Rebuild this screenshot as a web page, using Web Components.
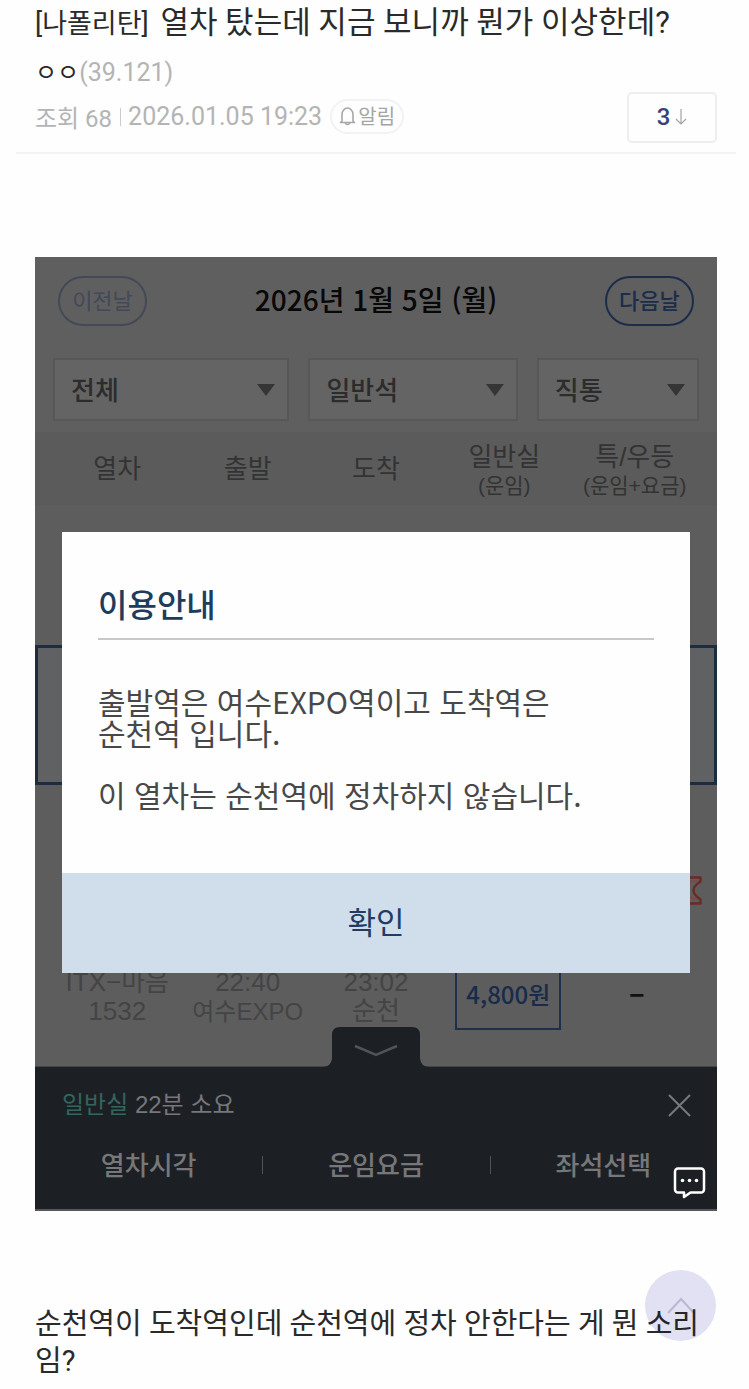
<!DOCTYPE html>
<html lang="ko">
<head>
<meta charset="utf-8">
<meta name="viewport" content="width=device-width, initial-scale=1">
<title>열차 탔는데 지금 보니까 뭔가 이상한데?</title>
<style>
    body {
        margin: 0;
        background: #fefefe;
        color: #2a2a2a;
        font-family: Roboto, "Noto Sans CJK KR", sans-serif;
    }
</style>
</head>
<body>
<post-view>
    <post-header slot="header" category="[나폴리탄]" nick="ㅇㅇ" ip="(39.121)" views="68" date="2026.01.05 19:23" comments="3">열차 탔는데 지금 보니까 뭔가 이상한데?</post-header>
    <train-board>
        <notice-dialog slot="dialog" heading="이용안내" confirm="확인">출발역은 여수EXPO역이고 도착역은
순천역 입니다.

이 열차는 순천역에 정차하지 않습니다.</notice-dialog>
    </train-board>
    <span slot="text">순천역이 도착역인데 순천역에 정차 안한다는 게 뭔 소리임?</span>
</post-view>
<top-button></top-button>

<script>
class PostView extends HTMLElement {
    constructor() {
        super();
        this.attachShadow({ mode: 'open' });
        this.shadowRoot.innerHTML = `
            <style>
                :host { display: block; }
                .content { padding: 103px 32px 8px 35px; }
                p {
                    margin: 95px 0 0;
                    font-size: 29px;
                    line-height: 37px;
                    word-break: break-all;
                }
            </style>
            <article>
                <slot name="header"></slot>
                <div class="content">
                    <slot></slot>
                    <p><slot name="text"></slot></p>
                </div>
            </article>
        `;
    }
}

class PostHeader extends HTMLElement {
    constructor() {
        super();
        this.attachShadow({ mode: 'open' });
    }

    connectedCallback() {
        const attr = name => this.getAttribute(name);
        this.shadowRoot.innerHTML = `
            <style>
                :host {
                    display: block;
                    margin: 0 13px 0 16px;
                    padding: 0 19px 9px;
                    border-bottom: 2px solid #f3f3f3;
                }
                h1 {
                    margin: 0;
                    font-size: 31px;
                    font-weight: 400;
                    line-height: 46px;
                }
                .category {
                    font-size: 27px;
                    margin-right: 4px;
                }
                .bottom {
                    display: flex;
                    justify-content: space-between;
                    align-items: flex-end;
                }
                .writer {
                    font-size: 24px;
                    line-height: 32px;
                    padding-top: 10px;
                }
                .ip, .meta { color: #b4b4b4; }
                .ip { font-size: 25px; }
                .meta {
                    display: flex;
                    align-items: center;
                    font-size: 24px;
                    height: 35px;
                    margin: 10px 0 9px;
                }
                .views {
                    padding-right: 8px;
                }
                time {
                    font-size: 25px;
                    line-height: 20px;
                    padding-left: 7px;
                    margin-right: 8px;
                }
                .bar {
                    width: 1px;
                    height: 18px;
                    background: #ccc;
                }
                button {
                    display: flex;
                    align-items: center;
                    justify-content: center;
                    box-sizing: border-box;
                    background: none;
                    font-family: inherit;
                    padding: 0;
                }
                .alarm {
                    width: 74px;
                    height: 35px;
                    gap: 2px;
                    padding-bottom: 2px;
                    border: 2px solid #f2f2f2;
                    border-radius: 18px;
                    color: #a5a5a5;
                    font-size: 20px;
                }
                .count {
                    width: 90px;
                    height: 51px;
                    gap: 5px;
                    padding-bottom: 2px;
                    border: 2px solid #eee;
                    border-radius: 5px;
                    color: #3b4078;
                    font-size: 24px;
                    font-weight: 500;
                }
            </style>
            <h1><span class="category">${attr('category')}</span> <slot></slot></h1>
            <div class="bottom">
                <div>
                    <div class="writer">${attr('nick')}<span class="ip">${attr('ip')}</span></div>
                    <div class="meta">
                        <span class="views">조회 ${attr('views')}</span>
                        <span class="bar"></span>
                        <time>${attr('date')}</time>
                        <button class="alarm">
                            <svg width="17" height="20" viewBox="0 0 17 20" fill="none" stroke="#a8a8a8" stroke-width="1.6" stroke-linejoin="round">
                                <path d="M3 15V8.500a5.500 6.500 0 0 1 11 0V15l1.500 1.500h-14z"/>
                                <path d="M6.500 16.500a2 2 0 0 0 4 0"/>
                            </svg>알림
                        </button>
                    </div>
                </div>
                <button class="count">${attr('comments')}
                    <svg width="12" height="18" viewBox="0 0 12 18" fill="none" stroke="#a2a2a2" stroke-width="1.2">
                        <path d="M6 1v15M1 11l5 5 5-5"/>
                    </svg>
                </button>
            </div>
        `;
    }
}

class DropDown extends HTMLElement {
    constructor() {
        super();
        this.attachShadow({ mode: 'open' });
    }

    connectedCallback() {
        this.shadowRoot.innerHTML = `
            <style>
                :host {
                    display: block;
                    position: relative;
                    min-width: 0;
                }
                select {
                    display: block;
                    appearance: none;
                    box-sizing: border-box;
                    width: 100%;
                    height: 63px;
                    margin: 0;
                    padding: 2px 40px 0 16px;
                    border: 2px solid #575757;
                    border-radius: 0;
                    background: #646464;
                    color: #2c2c2c;
                    font-family: inherit;
                    font-size: 26px;
                    font-weight: 500;
                }
                svg {
                    position: absolute;
                    right: 14px;
                    top: 26px;
                    pointer-events: none;
                }
            </style>
            <select aria-label="${this.getAttribute('label')}">
                <option>${this.getAttribute('value')}</option>
            </select>
            <svg width="18" height="12" viewBox="0 0 18 12" fill="#353535"><path d="M0 0h18L9 12z"/></svg>
        `;
    }
}

class TrainBoard extends HTMLElement {
    constructor() {
        super();
        this.attachShadow({ mode: 'open' });
        this.shadowRoot.innerHTML = `
            <style>
                :host {
                    display: block;
                    position: relative;
                    background: #5d5d5d;
                    color: #333;
                    font-family: "Liberation Sans", "Noto Sans CJK KR", sans-serif;
                }
                button {
                    background: none;
                    border: 0;
                    padding: 0;
                    color: inherit;
                    font-family: inherit;
                }
                .top {
                    padding: 19px 18px 11px;
                    background: #5f5f5f;
                }
                .day {
                    display: flex;
                    align-items: center;
                    justify-content: space-between;
                    padding: 0 5px;
                    margin-bottom: 32px;
                }
                .day button {
                    box-sizing: border-box;
                    width: 89px;
                    height: 50px;
                    padding-bottom: 4px;
                    border: 2px solid currentColor;
                    border-radius: 25px;
                    font-size: 22px;
                    color: #1c2d4b;
                    font-weight: 500;
                }
                .day button.prev {
                    color: #434957;
                    font-weight: 400;
                }
                h2 {
                    margin: 0;
                    padding-bottom: 4px;
                    font-family: "Noto Sans CJK KR", sans-serif;
                    font-size: 28px;
                    line-height: 40px;
                    font-weight: 500;
                    color: #080808;
                }
                .filters {
                    display: grid;
                    grid-template-columns: 236fr 209fr 162fr;
                    gap: 19px;
                }
                table {
                    width: 100%;
                    table-layout: fixed;
                    border-collapse: collapse;
                    text-align: center;
                }
                col { width: 19%; }
                col.edge { width: 22%; }
                th, td { padding: 0; }
                th:first-child, td:first-child { padding-left: 16px; }
                th:last-child, td:last-child { padding-right: 16px; }
                th {
                    height: 73px;
                    background: #5b5b5b;
                    font-size: 26px;
                    font-weight: 400;
                    line-height: 30px;
                }
                th.fare {
                    box-sizing: border-box;
                    padding-top: 4px;
                }
                th small {
                    display: block;
                    font-size: 21px;
                    line-height: 28px;
                }
                td {
                    box-sizing: border-box;
                    height: 140px;
                    padding-top: 4px;
                    font-size: 26px;
                    line-height: 29px;
                    color: #444;
                }
                .station { font-size: 24px; }
                .selected {
                    background: #606162;
                    box-shadow: inset 0 0 0 3px #1e2c3f;
                }
                td.waiting {
                    text-align: right;
                    vertical-align: bottom;
                    padding: 0 15px 20px 0;
                }
                .waiting svg { display: block; margin-left: auto; }
                td.buy { padding: 0 0 0 8px; }
                .price {
                    display: block;
                    box-sizing: border-box;
                    width: 106px;
                    height: 70px;
                    margin: auto;
                    padding-bottom: 4px;
                    border: 2px solid #1d2f4c;
                    font-family: "Noto Sans CJK KR", sans-serif;
                    font-size: 24px;
                    font-weight: 500;
                    color: #182b4b;
                }
                td.none {
                    padding: 0 12px 0 0;
                    color: #111;
                    font-weight: 700;
                }
                .sheet {
                    position: relative;
                    background: #1c2024;
                    color: #77777a;
                    border-top: 1px solid #44474a;
                    border-bottom: 2px solid #55585b;
                    margin-top: 1px;
                }
                .handle {
                    position: absolute;
                    left: 0;
                    right: 0;
                    bottom: 100%;
                    margin: 0 auto;
                    width: 108px;
                    height: 41px;
                }
                .handle svg, .close svg { display: block; }
                .summary {
                    display: flex;
                    align-items: center;
                    justify-content: space-between;
                    padding: 20px 26px 0 27px;
                    font-size: 24px;
                    line-height: 36px;
                }
                .summary b { color: #35645f; font-weight: 400; }
                .menu {
                    display: grid;
                    grid-template-columns: 1fr 1fr 1fr;
                    padding: 23px 0;
                }
                .menu button {
                    font-size: 26px;
                    line-height: 40px;
                    font-weight: 500;
                    position: relative;
                }
                .menu button + button::before {
                    content: "";
                    position: absolute;
                    left: 0;
                    top: 10px;
                    width: 1px;
                    height: 18px;
                    background: #505357;
                }
                .reply {
                    position: absolute;
                    right: 11px;
                    bottom: 12px;
                }
                .reply svg { display: block; }
            </style>
            <div class="top">
                <div class="day">
                    <button class="prev">이전날</button>
                    <h2>2026년 1월 5일 (월)</h2>
                    <button>다음날</button>
                </div>
                <div class="filters">
                    <drop-down label="열차 종류" value="전체"></drop-down>
                    <drop-down label="좌석" value="일반석"></drop-down>
                    <drop-down label="경로" value="직통"></drop-down>
                </div>
            </div>
            <table>
                <colgroup><col class="edge"><col><col><col><col class="edge"></colgroup>
                <thead>
                    <tr>
                        <th>열차</th>
                        <th>출발</th>
                        <th>도착</th>
                        <th class="fare">일반실<small>(운임)</small></th>
                        <th class="fare">특/우등<small>(운임+요금)</small></th>
                    </tr>
                </thead>
                <tbody>
                    <tr><td colspan="5"></td></tr>
                    <tr class="selected"><td colspan="5"></td></tr>
                    <tr>
                        <td colspan="5" class="waiting">
                            <svg width="22" height="29" viewBox="0 0 22 29" fill="none" stroke="#6c2a22" stroke-width="2.4" stroke-linejoin="round">
                                <path d="M1.500 1.500h19v4c-3 2-7 5-7 9s4 7 7 9v4h-19v-4c3-2 7-5 7-9s-4-7-7-9z"/>
                                <path d="M4.500 5.500h13M5.500 24c3-3 8-3 11 0" stroke="#7d4a42" stroke-width="2"/>
                            </svg>
                        </td>
                    </tr>
                    <tr>
                        <td>ITX−마음<br>1532</td>
                        <td>22:40<br><span class="station">여수EXPO</span></td>
                        <td>23:02<br>순천</td>
                        <td class="buy"><button class="price">4,800원</button></td>
                        <td class="none">−</td>
                    </tr>
                </tbody>
            </table>
            <div class="sheet">
                <button class="handle" aria-label="접기">
                    <svg width="108" height="41" viewBox="0 0 108 41">
                        <path d="M0 41c7 0 10-4 10-10V9q0-8 8-8h72q8 0 8 8v22c0 6 3 10 10 10z" fill="#1c2024"/>
                        <path d="M33 20l21 9 21-9" fill="none" stroke="#505358" stroke-width="2.500"/>
                    </svg>
                </button>
                <div class="summary">
                    <span><b>일반실</b> 22분 소요</span>
                    <button class="close" aria-label="닫기">
                        <svg width="23" height="23" viewBox="0 0 23 23" stroke="#77797d" stroke-width="2"><path d="M1 1l21 21M22 1L1 22"/></svg>
                    </button>
                </div>
                <div class="menu">
                    <button>열차시각</button>
                    <button>운임요금</button>
                    <button>좌석선택</button>
                </div>
            </div>
            <slot name="dialog"></slot>
            <button class="reply" aria-label="댓글">
                <svg width="33" height="33" viewBox="0 0 33 33" fill="#1c2024" stroke="#fff" stroke-width="2.500" stroke-linejoin="round">
                    <path d="M5 2.500h23a3 3 0 0 1 3 3v18a3 3 0 0 1-3 3H17.500L11 31v-4.500H5a3 3 0 0 1-3-3v-18a3 3 0 0 1 3-3z"/>
                    <g fill="#fff" stroke="none"><circle cx="9.500" cy="14.500" r="1.800"/><circle cx="16.500" cy="14.500" r="1.800"/><circle cx="23.500" cy="14.500" r="1.800"/></g>
                </svg>
            </button>
        `;
    }
}

class NoticeDialog extends HTMLElement {
    constructor() {
        super();
        this.attachShadow({ mode: 'open' });
    }

    connectedCallback() {
        this.shadowRoot.innerHTML = `
            <style>
                :host {
                    display: block;
                    position: absolute;
                    top: 275px;
                    left: 27px;
                    right: 27px;
                    background: #fefefe;
                    color: #484848;
                    font-family: "Noto Sans CJK KR", sans-serif;
                }
                .body { padding: 49px 36px 63px; }
                h3 {
                    margin: 0 0 46px;
                    padding-bottom: 13px;
                    border-bottom: 2px solid #c8c8c8;
                    color: #203c5c;
                    font-size: 32px;
                    font-weight: 500;
                    line-height: 44px;
                }
                p {
                    margin: 0;
                    font-size: 30px;
                    line-height: 31px;
                    font-weight: 400;
                    white-space: pre-line;
                }
                button {
                    display: block;
                    width: 100%;
                    height: 100px;
                    padding: 0 0 6px;
                    border: 0;
                    background: #d0deeb;
                    color: #203c62;
                    font-family: inherit;
                    font-size: 31px;
                }
            </style>
            <div role="dialog" aria-labelledby="heading">
                <div class="body">
                    <h3 id="heading">${this.getAttribute('heading')}</h3>
                    <p><slot></slot></p>
                </div>
                <button>${this.getAttribute('confirm')}</button>
            </div>
        `;
        this.shadowRoot.querySelector('button').onclick = () => this.remove();
    }
}

class TopButton extends HTMLElement {
    constructor() {
        super();
        this.attachShadow({ mode: 'open' });
        this.shadowRoot.innerHTML = `
            <style>
                :host {
                    display: block;
                    position: fixed;
                    right: 33px;
                    bottom: 48px;
                    mix-blend-mode: multiply;
                }
                button {
                    display: flex;
                    align-items: center;
                    justify-content: center;
                    width: 71px;
                    height: 71px;
                    padding: 0;
                    border: 0;
                    border-radius: 50%;
                    background: #e2e2f4;
                }
            </style>
            <button aria-label="맨 위로">
                <svg width="30" height="18" viewBox="0 0 30 18" fill="none" stroke="#b9b9d6" stroke-width="2"><path d="M2 16L15 2l13 14"/></svg>
            </button>
        `;
        this.shadowRoot.querySelector('button').onclick = () => window.scrollTo(0, 0);
    }
}

customElements.define('post-view', PostView);
customElements.define('post-header', PostHeader);
customElements.define('drop-down', DropDown);
customElements.define('train-board', TrainBoard);
customElements.define('notice-dialog', NoticeDialog);
customElements.define('top-button', TopButton);
</script>
</body>
</html>
